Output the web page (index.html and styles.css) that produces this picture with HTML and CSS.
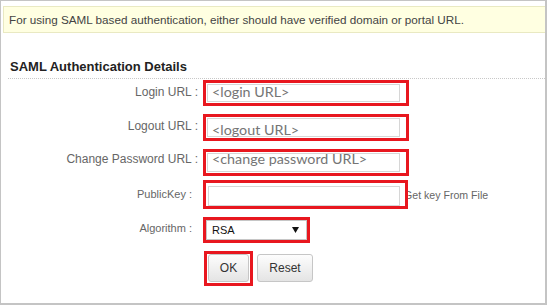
FILE: index.html
```html
<!DOCTYPE html>
<html lang="en">
<head>
<meta charset="utf-8">
<title>SAML Authentication Details</title>
<link rel="stylesheet" href="styles.css">
</head>
<body>
<div class="frame">
  <div class="notice">For using SAML based authentication, either should have verified domain or portal URL.</div>
  <h2 class="section-title">SAML Authentication Details</h2>
  <form class="form">
    <div class="row row-login">
      <label class="label">Login URL :</label>
      <div class="mark field">
        <div class="input input-login">&lt;login URL&gt;</div>
      </div>
    </div>
    <div class="row row-logout">
      <label class="label">Logout URL :</label>
      <div class="mark field field-tall">
        <div class="input input-logout">&lt;logout URL&gt;</div>
      </div>
    </div>
    <div class="row row-change">
      <label class="label label-change">Change Password URL :</label>
      <div class="mark field field-tall">
        <div class="input input-change">&lt;change password URL&gt;</div>
      </div>
    </div>
    <div class="row row-key">
      <label class="label label-small label-key">PublicKey :</label>
      <div class="mark field-key">
        <div class="input"></div>
      </div>
      <span class="key-link">Get key From File</span>
    </div>
    <div class="row row-algo">
      <label class="label label-small label-algo">Algorithm :</label>
      <div class="mark select-mark">
        <div class="select">
          <span>RSA</span>
          <svg class="caret" width="7" height="6" viewBox="0 0 7 6"><path d="M0 0H7L3.5 6Z" fill="#111"/></svg>
        </div>
      </div>
    </div>
    <div class="actions">
      <div class="mark ok-mark">
        <button type="button" class="btn btn-ok">OK</button>
      </div>
      <button type="button" class="btn btn-reset">Reset</button>
    </div>
  </form>
</div>
</body>
</html>
```

FILE: styles.css
```css
* { box-sizing: border-box; }

body {
  margin: 0;
  font-family: "Liberation Sans", Arial, sans-serif;
  background: #fff;
}

.frame {
  width: 547px;
  height: 305px;
  border-style: solid;
  border-color: #c4c4c4;
  border-width: 1px 2px 2px 1px;
  padding: 5px 0 0 2px;
  background: #fff;
}

.notice {
  height: 27px;
  border: 1px solid #e9e9c2;
  border-right: none;
  background: #ffffe1;
  padding-left: 5px;
  font-size: 11.7px;
  line-height: 25px;
  color: #444;
  white-space: nowrap;
}

.section-title {
  margin: 26px 0 0 5px;
  padding: 0 0 4px 2px;
  font-size: 13px;
  font-weight: bold;
  line-height: 15px;
  color: #222;
  border-bottom: 1px dotted #c8c8c8;
}

.form {
  margin: 1px 0 0 0;
}

.row {
  display: flex;
  align-items: flex-start;
}

.row-login { height: 34px; }
.row-logout { height: 35px; }
.row-change { height: 31px; }
.row-key { height: 37px; }
.row-algo { height: 34px; }

.label {
  flex: 0 0 195px;
  margin-right: 5px;
  padding-top: 5px;
  text-align: right;
  font-size: 12px;
  line-height: 14px;
  color: #666;
  white-space: nowrap;
}

.label-small {
  font-size: 11px;
  line-height: 13px;
  padding-right: 6px;
}

.label-change { padding-top: 3px; }
.label-key { padding-top: 8px; }
.label-algo { padding-top: 5px; }

.mark {
  border: 3px solid #e8171f;
  background: #fff;
}

.field {
  width: 206px;
  height: 26px;
  padding: 1px;
}

.field-tall { height: 27px; }

.input {
  height: 100%;
  margin-right: 5px;
  border: 1px solid #d6d6d6;
  padding-left: 4px;
  font-family: Lato, "Open Sans", sans-serif;
  font-size: 14.3px;
  color: #757575;
  white-space: nowrap;
}

.input-login { line-height: 13px; }
.input-logout { line-height: 21px; }
.input-change { line-height: 9px; }

.field-key {
  position: relative;
  z-index: 1;
  width: 205px;
  height: 29px;
  padding: 3px 0 0 2px;
}

.key-link {
  margin-left: -4px;
  padding-top: 9px;
  font-size: 10.6px;
  line-height: 13px;
  color: #666;
  white-space: nowrap;
}

.select-mark {
  width: 107px;
  height: 26px;
}

.select {
  display: flex;
  align-items: center;
  justify-content: space-between;
  height: 20px;
  border: 1px solid #c6c6c6;
  padding: 0 7px 0 5px;
  font-size: 11px;
  line-height: 18px;
  color: #111;
  background: #fff;
}

.caret { display: block; }

.actions {
  display: flex;
  align-items: flex-start;
  margin-left: 201px;
}

.ok-mark {
  padding: 0 1px 1px 1px;
}

.btn {
  display: block;
  height: 28px;
  padding: 0;
  border: 1px solid #c6c6c6;
  border-radius: 3px;
  background: linear-gradient(#fdfdfd, #e4e4e4);
  font-family: "Liberation Sans", Arial, sans-serif;
  font-size: 12px;
  color: #333;
}

.btn-ok { width: 41px; }

.btn-reset {
  width: 56px;
  margin: 3px 0 0 4px;
}
```
